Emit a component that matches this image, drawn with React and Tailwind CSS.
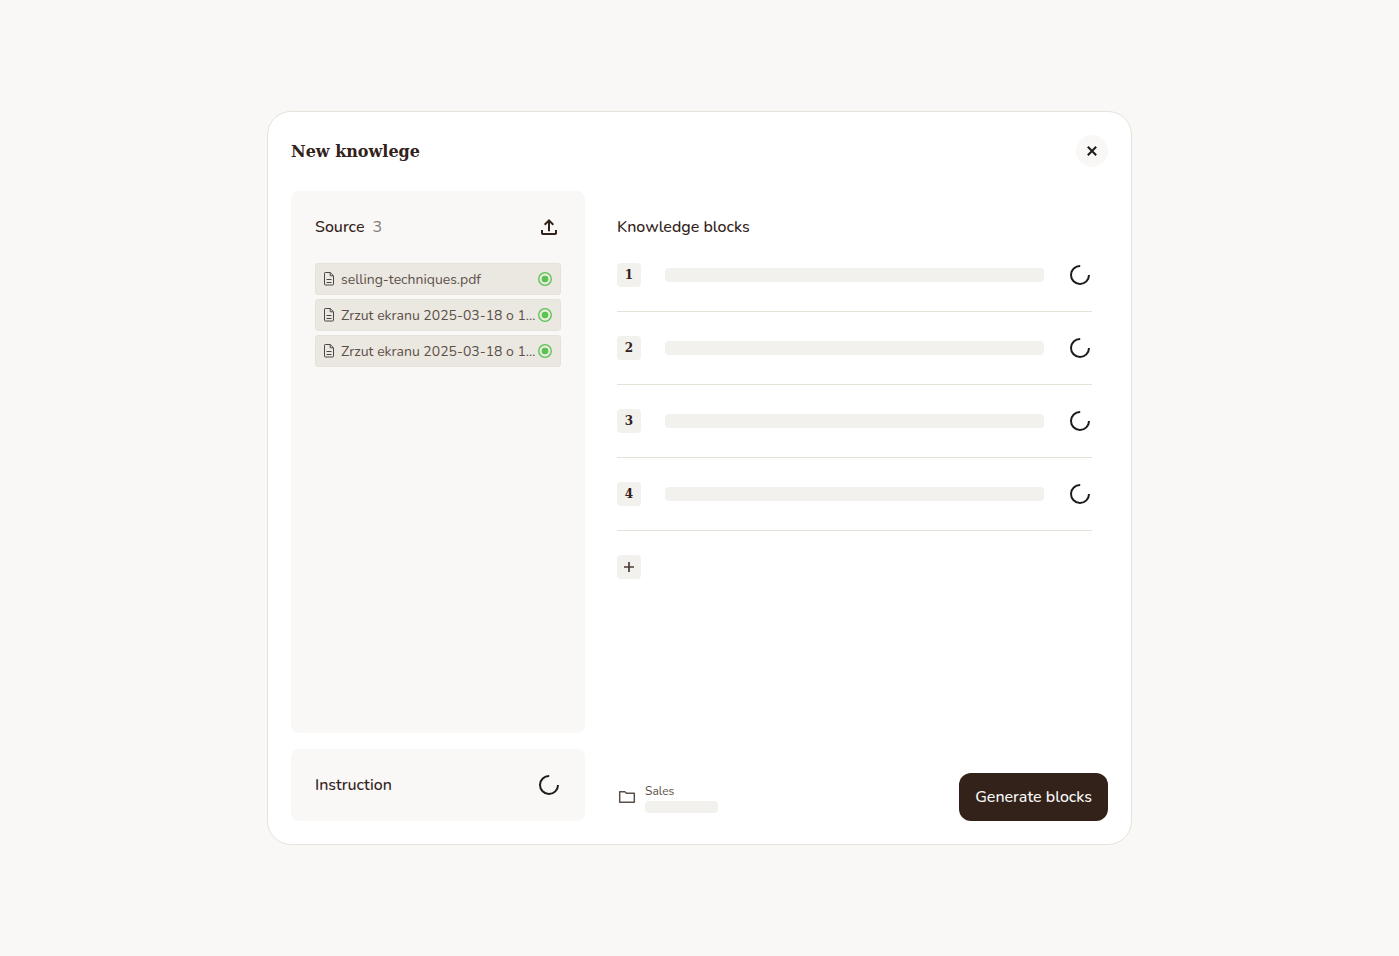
import React from "react";

const files = [
  "selling-techniques.pdf",
  "Zrzut ekranu 2025-03-18 o 1...",
  "Zrzut ekranu 2025-03-18 o 1...",
];

const blocks = [1, 2, 3, 4];

function Spinner() {
  return (
    <svg className="size-6 shrink-0" viewBox="0 0 24 24" fill="none" stroke="#1c1a1c" strokeWidth="2" role="status" aria-label="Loading">
      <path d="M12.2 3A9 9 0 1 0 21 12" />
    </svg>
  );
}

function UploadIcon() {
  return (
    <svg className="size-6" viewBox="0 0 24 24" fill="none" stroke="#32221a" strokeWidth="2" aria-hidden="true">
      <path d="M12 16.2V5.5M7.7 9.7 12 5.4l4.3 4.3" />
      <path d="M5 15v3.2a.8.8 0 0 0 .8.8h12.4a.8.8 0 0 0 .8-.8V15" />
    </svg>
  );
}

function FileIcon() {
  return (
    <svg className="mr-[7px] h-3.5 w-2.5 shrink-0" viewBox="0 0 10 14" fill="none" stroke="#4d4643" aria-hidden="true">
      <path d="M.5 1.2a.7.7 0 0 1 .7-.7h5L9.5 3.8v8.5a.7.7 0 0 1-.7.7H1.2a.7.7 0 0 1-.7-.7Z" />
      <path d="M6.2.6v3.2h3.2" />
      <path d="M2.5 7.5h5M2.5 10.5h5" />
    </svg>
  );
}

function ReadyIcon() {
  return (
    <svg className="ml-auto size-3.5 shrink-0" viewBox="0 0 14 14" fill="none" role="img" aria-label="Ready">
      <circle cx="7" cy="7" r="6.3" stroke="#57c44e" strokeWidth="1.3" />
      <circle cx="7" cy="7" r="3.3" fill="#57c44e" />
    </svg>
  );
}

function FolderIcon() {
  return (
    <svg className="size-5 shrink-0" viewBox="0 0 20 20" fill="none" stroke="#5c4f49" strokeWidth="1.5" strokeLinejoin="round" aria-hidden="true">
      <path d="M2.7 4.7h5.1l1.7 1.6h7.8v9H2.7Z" />
    </svg>
  );
}

function SourcePanel() {
  return (
    <section className="flex-1 rounded-lg bg-[#f9f8f6] p-6">
      <div className="flex h-6 items-center">
        <h2 className="text-base font-medium text-[#32221a]">Source</h2>
        <span className="ml-2 text-base text-[#857b76]">3</span>
        <button type="button" aria-label="Upload source" className="ml-auto">
          <UploadIcon />
        </button>
      </div>
      <ul className="mt-6 flex flex-col gap-1">
        {files.map((name, i) => (
          <li key={i} className="flex h-8 items-center rounded-[3px] border border-[#e5e3d9] bg-[#ebe8e1] px-2">
            <FileIcon />
            <span className="whitespace-nowrap text-sm leading-[21px] text-[#5c4f49]">{name}</span>
            <ReadyIcon />
          </li>
        ))}
      </ul>
    </section>
  );
}

function BlockRow({ number }) {
  return (
    <li className="flex items-center gap-6 border-b border-[#e5e3d9] pb-6">
      <span className="flex size-6 items-center justify-center rounded bg-[#f2f1ed] font-['Roboto_Slab','DejaVu_Serif',serif] text-xs leading-[18px] font-bold text-[#32221a]">
        {number}
      </span>
      <div className="h-3.5 flex-1 rounded bg-[#f2f1ed]" />
      <Spinner />
    </li>
  );
}

export default function App() {
  return (
    <div className="flex min-h-screen items-center justify-center bg-[#f9f8f6] font-['Nunito','Noto_Sans',sans-serif] text-[#32221a]">
      <main className="flex min-h-[734px] w-full max-w-[865px] flex-col rounded-3xl border border-[#e5e3d9] bg-white p-[23px]">
        <header className="flex h-8 items-center justify-between">
          <h1 className="font-['Roboto_Slab','DejaVu_Serif',serif] text-base leading-[27px] font-bold">New knowlege</h1>
          <button type="button" aria-label="Close" className="flex size-8 items-center justify-center rounded-full bg-[#f9f8f6]">
            <svg className="size-4" viewBox="0 0 16 16" fill="none" stroke="#1c1a1c" strokeWidth="2" aria-hidden="true">
              <path d="m3.8 3.8 8.4 8.4M12.2 3.8l-8.4 8.4" />
            </svg>
          </button>
        </header>
        <div className="mt-6 flex flex-1">
          <div className="flex w-[294px] shrink-0 flex-col gap-4">
            <SourcePanel />
            <section className="flex items-center justify-between rounded-lg bg-[#f9f8f6] p-6">
              <h2 className="text-base font-medium">Instruction</h2>
              <Spinner />
            </section>
          </div>
          <div className="flex flex-1 flex-col pl-8">
            <section className="pt-6 pr-4">
              <h2 className="text-base font-medium">Knowledge blocks</h2>
              <ol className="mt-6 flex flex-col gap-6">
                {blocks.map((n) => (
                  <BlockRow key={n} number={n} />
                ))}
              </ol>
              <button type="button" aria-label="Add block" className="mt-6 flex size-6 items-center justify-center rounded bg-[#f2f1ed]">
                <svg className="size-3" viewBox="0 0 12 12" fill="none" stroke="#4a3c35" strokeWidth="1.7" aria-hidden="true">
                  <path d="M6 1v10M1 6h10" />
                </svg>
              </button>
            </section>
            <footer className="mt-auto flex items-center justify-between">
              <div className="flex items-center gap-2">
                <FolderIcon />
                <div className="flex flex-col">
                  <span className="text-xs leading-5 text-[#5c4f49]">Sales</span>
                  <div className="h-3 w-[73px] rounded bg-[#f2f1ed]" />
                </div>
              </div>
              <button type="button" className="h-12 rounded-xl bg-[#32221a] px-4 text-base font-medium text-[#f9f8f6]">
                Generate blocks
              </button>
            </footer>
          </div>
        </div>
      </main>
    </div>
  );
}
